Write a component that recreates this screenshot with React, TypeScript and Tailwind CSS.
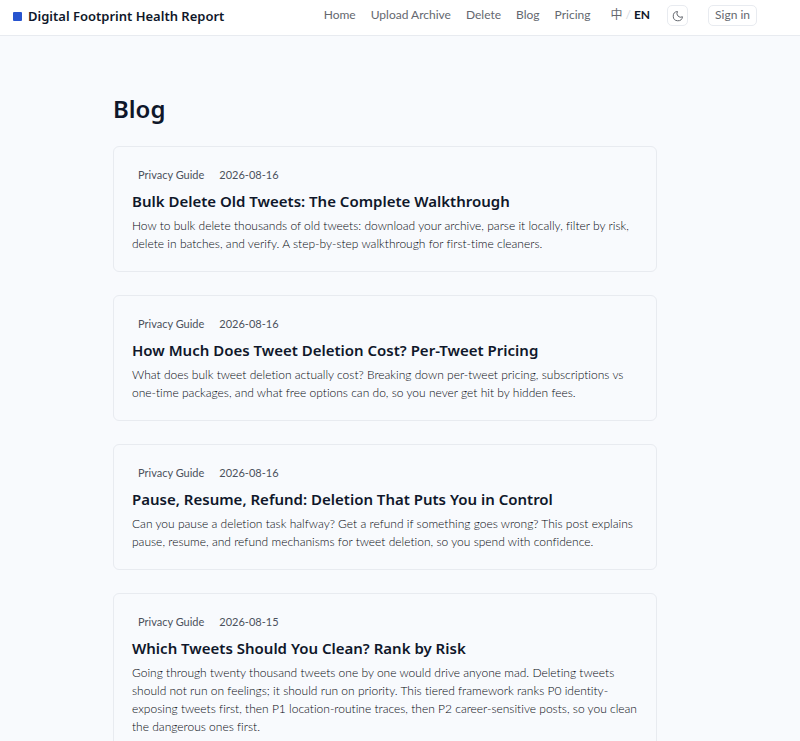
import React from "react";

interface Post {
  title: string;
  date: string;
  excerpt: string;
}

const navLinks = ["Home", "Upload Archive", "Delete", "Blog", "Pricing"];

const posts: Post[] = [
  {
    title: "Bulk Delete Old Tweets: The Complete Walkthrough",
    date: "2026-08-16",
    excerpt:
      "How to bulk delete thousands of old tweets: download your archive, parse it locally, filter by risk, delete in batches, and verify. A step-by-step walkthrough for first-time cleaners.",
  },
  {
    title: "How Much Does Tweet Deletion Cost? Per-Tweet Pricing",
    date: "2026-08-16",
    excerpt:
      "What does bulk tweet deletion actually cost? Breaking down per-tweet pricing, subscriptions vs one-time packages, and what free options can do, so you never get hit by hidden fees.",
  },
  {
    title: "Pause, Resume, Refund: Deletion That Puts You in Control",
    date: "2026-08-16",
    excerpt:
      "Can you pause a deletion task halfway? Get a refund if something goes wrong? This post explains pause, resume, and refund mechanisms for tweet deletion, so you spend with confidence.",
  },
  {
    title: "Which Tweets Should You Clean? Rank by Risk",
    date: "2026-08-15",
    excerpt:
      "Going through twenty thousand tweets one by one would drive anyone mad. Deleting tweets should not run on feelings; it should run on priority. This tiered framework ranks P0 identity-exposing tweets first, then P1 location-routine traces, then P2 career-sensitive posts, so you clean the dangerous ones first.",
  },
];

const Header: React.FC = () => {
  return (
    <header className="h-9 border-b border-[#e8ebf0] bg-white pl-[13px] pr-[43px] flex items-start justify-between">
      <a href="#" className="flex items-center gap-[6px] pt-[6px] text-[13px] leading-5 font-semibold text-[#0f172a] whitespace-nowrap font-['Noto_Sans',sans-serif]">
        <span className="size-[9px] rounded-[1px] bg-[#2754cf]"></span>
        Digital Footprint Health Report
      </a>

      <nav className="flex items-start pt-[5px] text-[12px] leading-[19px] text-[#64686f] whitespace-nowrap">
        <div className="flex gap-[15px]">
          {navLinks.map((link) => (
            <a key={link} href="#">
              {link}
            </a>
          ))}
        </div>
        <div className="ml-5 flex items-center gap-[3px]">
          <button type="button">中</button>
          <span className="text-[#d5d9df]">/</span>
          <button type="button" className="font-bold text-[#0f172a]">
            EN
          </button>
        </div>
        <button
          type="button"
          aria-label="Toggle dark mode"
          className="ml-[17px] size-[21px] rounded-[5px] border border-[#e8ebf0] flex items-center justify-center"
        >
          <svg className="size-3" viewBox="0 0 24 24" fill="none" stroke="currentColor" strokeWidth="2" strokeLinejoin="round">
            <path d="M11 3A7.5 7.5 0 0 0 21 13.5A9.3 9.3 0 1 1 11 3z" />
          </svg>
        </button>
        <a href="#" className="ml-5 h-[21px] rounded-[5px] border border-[#e8ebf0] px-[6px] leading-[18px]">
          Sign in
        </a>
      </nav>
    </header>
  );
};

const PostCard: React.FC<{ post: Post }> = ({ post }) => {
  return (
    <article className="rounded-md border border-[#e8ebf0] px-[18px] pt-[19px] pb-[18px]">
      <div className="mb-[5px] flex gap-[15px] pl-[6px] text-[11px] leading-[18px] text-[#4b515c]">
        <span>Privacy Guide</span>
        <time dateTime={post.date}>{post.date}</time>
      </div>
      <h2 className="mb-1 text-[15px] leading-6 font-semibold text-[#0f172a] font-['Noto_Sans',sans-serif]">
        <a href="#">{post.title}</a>
      </h2>
      <p className="text-[12px] leading-[18px] font-light text-[#05080f]">{post.excerpt}</p>
    </article>
  );
};

const App: React.FC = () => {
  return (
    <div className="min-h-screen bg-[#f8fafd] font-['Lato','Noto_Sans_CJK_SC',sans-serif] [font-variant-ligatures:none]">
      <Header />
      <main className="pr-[30px]">
        <div className="mx-auto max-w-[544px] pt-[55px]">
          <h1 className="mb-[19px] text-[24px] leading-9 font-semibold text-[#0f172a] font-['Noto_Sans',sans-serif]">Blog</h1>
          <div className="flex flex-col gap-[23px]">
            {posts.map((post) => (
              <PostCard key={post.title} post={post} />
            ))}
          </div>
        </div>
      </main>
    </div>
  );
};

export default App;
